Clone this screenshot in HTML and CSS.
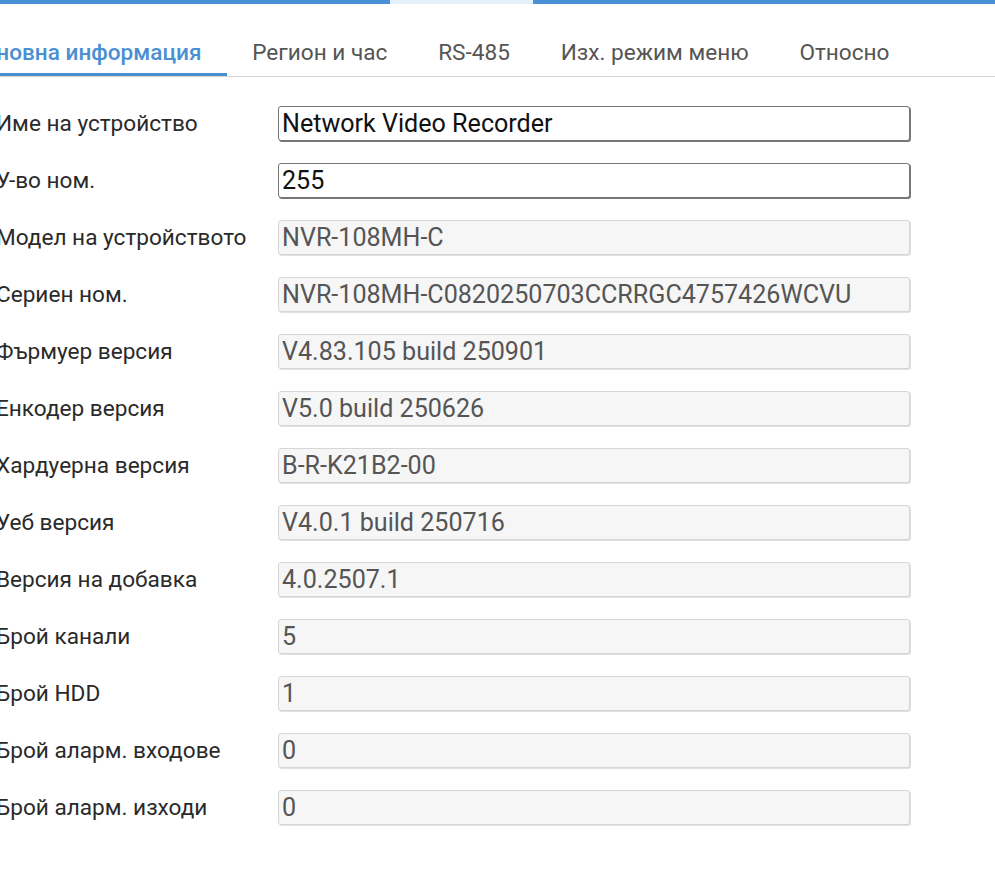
FILE: index.html
```html
<!DOCTYPE html>
<html lang="bg">
<head>
<meta charset="utf-8">
<title>Основна информация</title>
<link rel="stylesheet" href="styles.css">
</head>
<body>
<div class="topbar">
  <div class="seg seg-blue seg-left"></div>
  <div class="seg seg-light"></div>
  <div class="seg seg-blue seg-fill"></div>
</div>
<nav class="tabs">
  <div class="tab active">Основна информация</div>
  <div class="tab">Регион и час</div>
  <div class="tab">RS-485</div>
  <div class="tab">Изх. режим меню</div>
  <div class="tab">Относно</div>
</nav>
<form class="form">
  <div class="row"><label class="label">Име на устройство</label><input class="field edit" type="text" value="Network Video Recorder"></div>
  <div class="row"><label class="label">У-во ном.</label><input class="field edit" type="text" value="255"></div>
  <div class="row"><label class="label">Модел на устройството</label><input class="field ro" type="text" value="NVR-108MH-C" disabled></div>
  <div class="row"><label class="label">Сериен ном.</label><input class="field ro" type="text" value="NVR-108MH-C0820250703CCRRGC4757426WCVU" disabled></div>
  <div class="row"><label class="label">Фърмуер версия</label><input class="field ro" type="text" value="V4.83.105 build 250901" disabled></div>
  <div class="row"><label class="label">Енкодер версия</label><input class="field ro" type="text" value="V5.0 build 250626" disabled></div>
  <div class="row"><label class="label">Хардуерна версия</label><input class="field ro" type="text" value="B-R-K21B2-00" disabled></div>
  <div class="row"><label class="label">Уеб версия</label><input class="field ro" type="text" value="V4.0.1 build 250716" disabled></div>
  <div class="row"><label class="label">Версия на добавка</label><input class="field ro" type="text" value="4.0.2507.1" disabled></div>
  <div class="row"><label class="label">Брой канали</label><input class="field ro" type="text" value="5" disabled></div>
  <div class="row"><label class="label">Брой HDD</label><input class="field ro" type="text" value="1" disabled></div>
  <div class="row"><label class="label">Брой аларм. входове</label><input class="field ro" type="text" value="0" disabled></div>
  <div class="row"><label class="label">Брой аларм. изходи</label><input class="field ro" type="text" value="0" disabled></div>
</form>
</body>
</html>
```

FILE: styles.css
```css
html, body {
  margin: 0;
  padding: 0;
  background: #ffffff;
  overflow: hidden;
}
body {
  font-family: Roboto, "Noto Sans", "Liberation Sans", sans-serif;
  color: #333333;
  width: 995px;
}
.topbar {
  display: flex;
  height: 4px;
}
.seg-blue { background: #4a90d6; }
.seg-left { width: 390px; }
.seg-light { width: 143px; background: #e4f1fb; }
.seg-fill { flex: 1; }

.tabs {
  display: flex;
  margin-left: -56.5px;
  border-bottom: 1px solid #d6d6d6;
}
.tab {
  padding: 37px 25.4px 8px;
  line-height: 24px;
  font-size: 22.6px;
  color: #555555;
  border-bottom: 3px solid transparent;
  white-space: nowrap;
}
.tab.active {
  color: #4a8fd2;
  font-weight: 500;
  border-bottom-color: #4a8fd2;
}

.form {
  display: flex;
  flex-direction: column;
  padding-top: 18px;
  margin-left: -4px;
}
.row {
  display: flex;
  align-items: center;
  height: 57px;
}
.label {
  width: 282px;
  font-size: 22.6px;
  color: #2a2a2a;
  white-space: nowrap;
}
.field {
  box-sizing: border-box;
  width: 632px;
  height: 35px;
  margin: 0;
  padding: 0 3px;
  font-family: Roboto, "Noto Sans", "Liberation Sans", sans-serif;
  font-size: 25.1px;
  border-radius: 3px;
  outline: none;
}
.field.edit {
  color: #111111;
  background: #ffffff;
  border: 1px solid #777777;
  box-shadow: 1px 1px 0 #777777;
}
.field.ro {
  color: #555555;
  background: #f6f6f6;
  border: 1px solid #d6d6d6;
  box-shadow: 1px 1px 0 #e0e0e0;
  -webkit-text-fill-color: #555555;
  opacity: 1;
}
```
